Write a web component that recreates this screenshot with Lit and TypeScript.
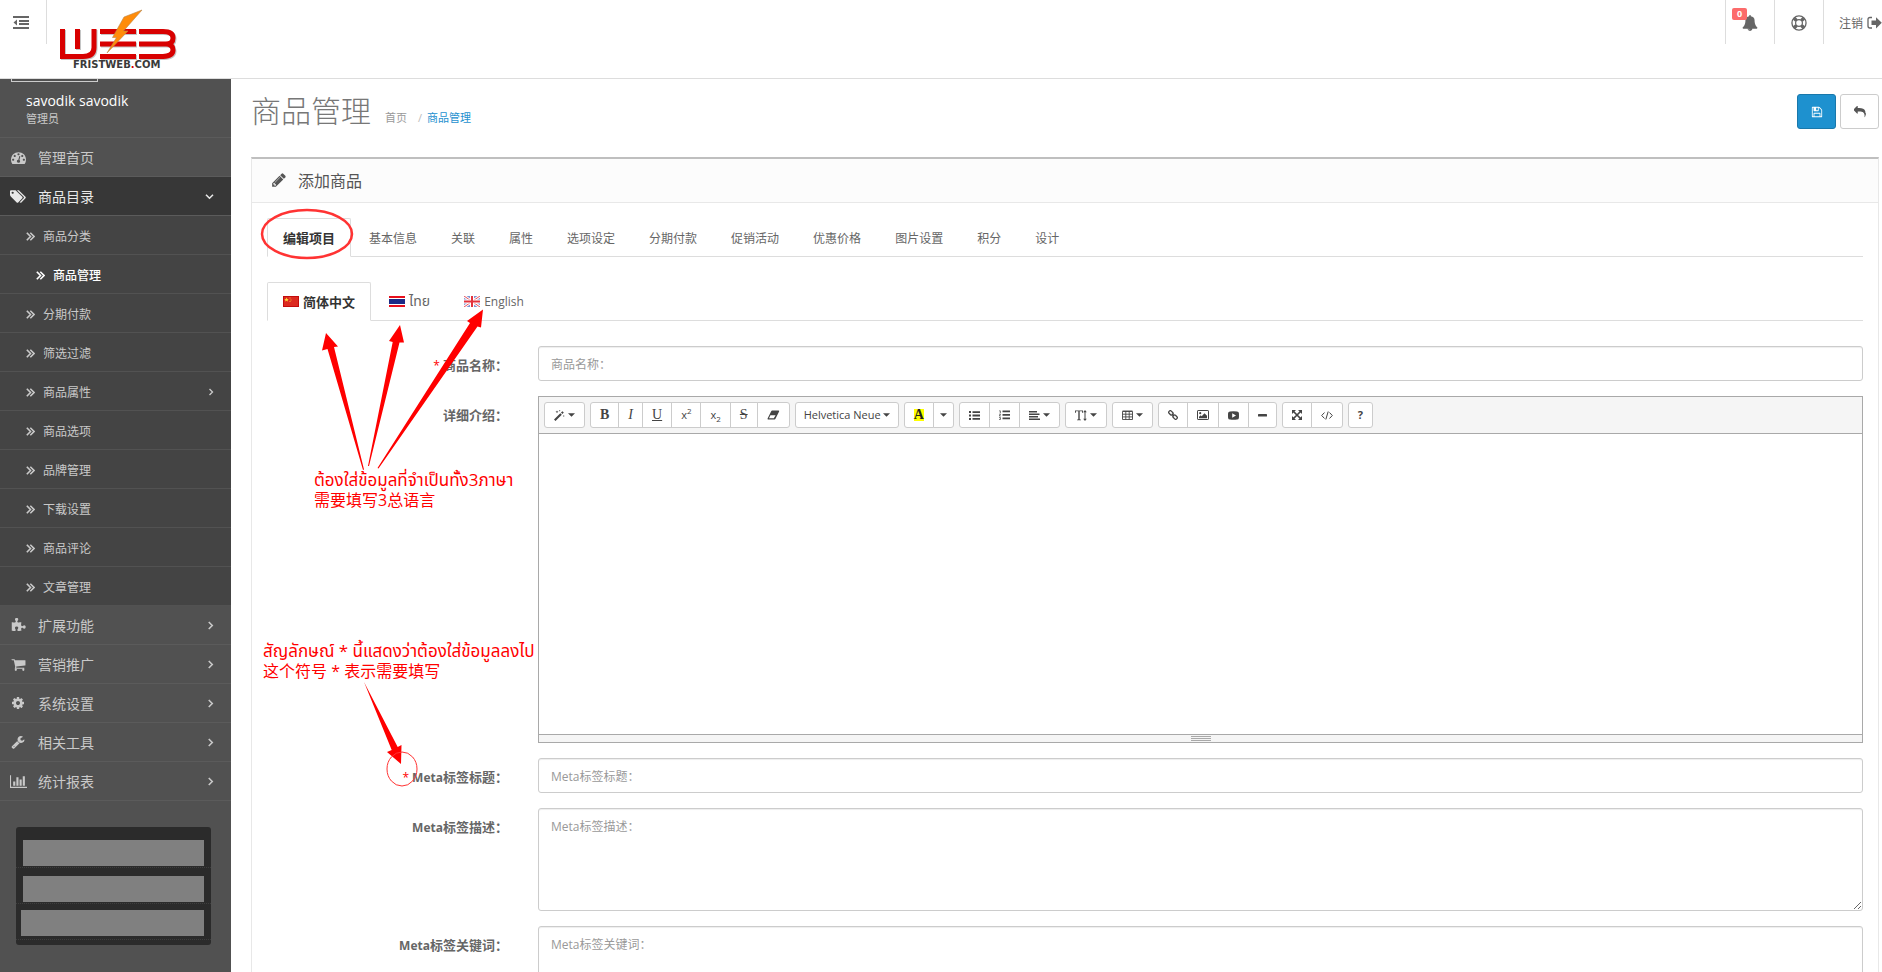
import { LitElement, html, svg, css, nothing } from "lit";
import { customElement, property } from "lit/decorators.js";
import { classMap } from "lit/directives/class-map.js";

type Glyph = { box: string; draw: unknown };

const g1792 = (d: string): Glyph => ({ box: "0 0 1792 1792", draw: svg`<path d=${d}></path>` });
const g2048 = (d: string): Glyph => ({ box: "0 0 2048 1792", draw: svg`<path d=${d}></path>` });

const glyphs: Record<string, Glyph> = {
  dedent: {
    box: "0 0 16 13",
    draw: svg`<path d="M0 0h16v2H0zM6 4h10v2H6zM6 7h10v2H6zM0 11h16v2H0zM4 3.400v6.200L.5 6.500z"></path>`,
  },
  bell: g1792("M912 1696q0-16-16-16-59 0-101.500-42.500t-42.500-101.500q0-16-16-16t-16 16q0 73 51.500 124.500t124.500 51.500q16 0 16-16zm816-288q0 52-38 90t-90 38h-448q0 106-75 181t-181 75-181-75-75-181h-448q-52 0-90-38t-38-90q50-42 91-88t85-119.500 74.500-158.500 50-206 19.500-260q0-152 117-282.500t307-158.500q-8-19-8-39 0-40 28-68t68-28 68 28 28 68q0 20-8 39 190 28 307 158.500t117 282.500q0 139 19.500 260t50 206 74.500 158.500 85 119.500 91 88z"),
  ring: {
    box: "0 0 17 17",
    draw: svg`<g fill="none" stroke="currentColor"><circle cx="8.500" cy="8.500" r="7.500" stroke-width="1.400"></circle><circle cx="8.500" cy="8.500" r="3.600" stroke-width="1.300"></circle><path d="M3.400 3.400l2.400 2.400M13.600 3.400l-2.400 2.400M3.400 13.600l2.400-2.400M13.600 13.600l-2.400-2.400" stroke-width="3.600"></path></g>`,
  },
  signout: {
    box: "0 0 15 14",
    draw: svg`<path d="M5 1.500H3Q1 1.500 1 3.500v6.500q0 2 2 2h2" fill="none" stroke="currentColor" stroke-width="1.300"></path><path d="M4.500 4.500H9V1.200L14.800 6.800 9 12.400V9H4.500z"></path>`,
  },
  gauge: g1792("M384 1152q0-53-37.500-90.500t-90.500-37.500-90.500 37.500-37.500 90.500 37.500 90.500 90.500 37.500 90.500-37.500 37.500-90.500zm192-448q0-53-37.500-90.500t-90.500-37.500-90.500 37.500-37.500 90.500 37.500 90.500 90.500 37.500 90.500-37.500 37.500-90.500zm428 481l101-382q6-26-7.500-48.500t-38.500-29.500-48 6.500-30 39.500l-101 382q-60 5-107 43.500t-63 98.500q-20 77 20 146t117 89 146-20 89-117q16-60-6-117t-72-91zm660-33q0-53-37.500-90.500t-90.500-37.500-90.500 37.500-37.500 90.500 37.500 90.500 90.500 37.500 90.500-37.500 37.500-90.500zm-640-640q0-53-37.500-90.500t-90.500-37.500-90.500 37.500-37.500 90.500 37.500 90.500 90.500 37.500 90.500-37.500 37.500-90.500zm448 192q0-53-37.500-90.500t-90.500-37.500-90.500 37.500-37.500 90.500 37.500 90.500 90.500 37.500 90.500-37.500 37.500-90.500zm320 448q0 261-141 483-19 29-54 29h-1402q-35 0-54-29-141-221-141-483 0-182 71-348t191-286 286-191 348-71 348 71 286 191 191 286 71 348z"),
  tags: g2048("M448 448q0-53-37.500-90.500t-90.500-37.500-90.500 37.500-37.500 90.500 37.500 90.500 90.500 37.500 90.500-37.500 37.500-90.500zm1067 576q0 53-37 90l-491 492q-39 37-91 37-53 0-90-37l-715-716q-38-37-64.500-101t-26.500-117v-416q0-52 38-90t90-38h416q53 0 117 26.500t102 64.500l715 714q37 39 37 91zm384 0q0 53-37 90l-491 492q-39 37-91 37-36 0-59-14t-53-45l470-470q37-37 37-90 0-52-37-91l-715-714q-38-38-102-64.500t-117-26.500h224q53 0 117 26.500t102 64.500l715 714q37 39 37 91z"),
  puzzle: g1792("M1755 1083q0 81-44.500 135t-123.500 54q-41 0-77.500-17.500t-59-38-56.500-38-71-17.500q-110 0-110 124 0 39 16 115t15 115v5q-22 0-33 1-34 3-97.500 11.500t-115.500 13.500-98 5q-61 0-103-26.500t-42-83.500q0-37 17.500-71t38-56.500 38-59 17.500-77.500q0-79-54-123.500t-135-44.500q-84 0-143 45.500t-59 127.500q0 43 15 83t33.500 64.500 33.500 53 15 50.500q0 45-46 89-37 35-117 35-95 0-245-24-9-2-27.500-4t-27.500-4l-13-2q-1 0-3-1-2 0-2-1v-1024q2 1 17.500 3.500t34 5 21.500 3.500q150 24 245 24 80 0 117-35 46-44 46-89 0-22-15-50.500t-33.500-53-33.500-64.500-15-83q0-82 59-127.500t144-45.500q80 0 134 44.500t54 123.500q0 41-17.500 77.500t-38 59-38 56.500-17.500 71q0 57 42 83.500t103 26.500q64 0 180-15t163-17v2q-1 2-3.500 17.500t-5 34-3.500 21.500q-24 150-24 245 0 80 35 117 44 46 89 46 22 0 50.500-15t53-33.500 64.500-33.500 83-15q82 0 127.500 59t45.500 143z"),
  cart: g1792("M704 1536q0 52-38 90t-90 38-90-38-38-90 38-90 90-38 90 38 38 90zm896 0q0 52-38 90t-90 38-90-38-38-90 38-90 90-38 90 38 38 90zm128-1088v512q0 24-16.500 42.500t-40.500 21.500l-1044 122q13 60 13 70 0 16-24 64h920q26 0 45 19t19 45-19 45-45 19h-1024q-26 0-45-19t-19-45q0-11 8-31.500t16-36 21.500-40 15.500-29.500l-177-823h-204q-26 0-45-19t-19-45 19-45 45-19h256q16 0 28.500 6.500t19.500 15.500 13 24.500 8 26 5.500 29.500 4.500 26h1201q26 0 45 19t19 45z"),
  cog: g1792("M1152 896q0-106-75-181t-181-75-181 75-75 181 75 181 181 75 181-75 75-181zm512-109v222q0 12-8 23t-20 13l-185 28q-19 54-39 91 35 50 107 138 10 12 10 25t-9 23q-27 37-99 108t-94 71q-12 0-26-9l-138-108q-44 23-91 38-16 136-29 186-7 28-36 28h-222q-14 0-24.500-8.500t-11.500-21.500l-28-184q-49-16-90-37l-141 107q-10 9-25 9-14 0-25-11-126-114-165-168-7-10-7-23 0-12 8-23 15-21 51-66.500t54-70.500q-27-50-41-99l-183-27q-13-2-21-12.500t-8-23.500v-222q0-12 8-23t19-13l186-28q14-46 39-92-40-57-107-138-10-12-10-24 0-10 9-23 26-36 98.500-107.500t94.500-71.500q13 0 26 10l138 107q44-23 91-38 16-136 29-186 7-28 36-28h222q14 0 24.500 8.500t11.500 21.500l28 184q49 16 90 37l142-107q9-9 24-9 13 0 25 10 129 119 165 170 7 8 7 22 0 12-8 23-15 21-51 66.500t-54 70.500q26 50 41 98l183 28q13 2 21 12.500t8 23.500z"),
  wrench: g1792("M448 1472q0-26-19-45t-45-19-45 19-19 45 19 45 45 19 45-19 19-45zm644-420l-682 682q-37 37-90 37-52 0-91-37l-106-108q-38-36-38-90 0-53 38-91l681-681q39 98 114.500 173.500t173.500 114.500zm634-435q0 39-23 106-47 134-164.500 217.500t-258.500 83.500q-185 0-316.500-131.500t-131.500-316.500 131.500-316.500 316.500-131.500q58 0 121.500 16.500t107.500 46.500q16 11 16 28t-16 28l-293 169v224l193 107q5-3 79-48.500t135.500-81 70.500-35.500q15 0 23.500 10t8.500 25z"),
  chart: g2048("M640 896v512h-256v-512h256zm384-512v1024h-256v-1024h256zm1024 1152v128h-2048v-1536h128v1408h1920zm-640-896v768h-256v-768h256zm384-384v1152h-256v-1152h256z"),
  pencil: g1792("M491 1536l91-91-235-235-91 91v107h128v128h107zm523-928q0-22-22-22-10 0-17 7l-542 542q-7 7-7 17 0 22 22 22 10 0 17-7l542-542q7-7 7-17zm-54-192l416 416-832 832h-416v-416zm683 96q0 53-37 90l-166 166-416-416 166-165q36-38 90-38 53 0 91 38l235 234q37 39 37 91z"),
  save: g1792("M512 1536h768v-384h-768v384zm896 0h128v-896q0-14-10-38.500t-20-34.500l-281-281q-10-10-34-20t-39-10v416q0 40-28 68t-68 28h-576q-40 0-68-28t-28-68v-416h-128v1280h128v-416q0-40 28-68t68-28h832q40 0 68 28t28 68v416zm-384-928v-320q0-13-9.500-22.500t-22.500-9.500h-192q-13 0-22.500 9.500t-9.500 22.500v320q0 13 9.500 22.500t22.500 9.500h192q13 0 22.500-9.500t9.500-22.500zm640 32v928q0 40-28 68t-68 28h-1344q-40 0-68-28t-28-68v-1344q0-40 28-68t68-28h928q40 0 88 20t76 48l280 280q28 28 48 76t20 88z"),
  reply: g1792("M1792 1120q0 166-127 451-3 7-10.500 24t-13.500 30-13 22q-12 17-28 17-15 0-23.500-10t-8.500-25q0-9 2.500-26.500t2.500-23.500q5-68 5-123 0-112-19.500-200.500t-54-153.500-89-112-116-79.500-148-49.500-172-25.500-199-8.500h-224v256q0 26-19 45t-45 19-45-19l-512-512q-19-19-19-45t19-45l512-512q19-19 45-19t45 19 19 45v256h224q713 0 875 403 53 134 53 333z"),
  right: { box: "0 0 8 10", draw: svg`<path d="M2 1l4 4-4 4" fill="none" stroke="currentColor" stroke-width="1.800"></path>` },
  down: { box: "0 0 10 8", draw: svg`<path d="M1 2l4 4 4-4" fill="none" stroke="currentColor" stroke-width="1.800"></path>` },
  double: { box: "0 0 9 9", draw: svg`<path d="M.8 .8l3.700 3.700-3.700 3.700M4.300 .8L8 4.500 4.300 8.200" fill="none" stroke="currentColor" stroke-width="1.600"></path>` },
  caret: { box: "0 0 8 4", draw: svg`<path d="M0 0h8L4 4z"></path>` },
  magic: {
    box: "0 0 11 11",
    draw: svg`<path d="M0 9.500L6.300 3.200 7.800 4.700 1.500 11zM7 2.600l1.400-1.400 1.400 1.400-1.400 1.400zM3 .4l.5 1 1 .4-1 .4-.5 1-.5-1-1-.4 1-.4zM9.800 5l.3.700.8.300-.8.300-.3.800-.3-.8-.7-.3.700-.3zM5.600 0l.4.500.6.200-.6.300-.4.600-.3-.6-.5-.3.500-.2z"></path>`,
  },
  eraser: {
    box: "0 0 13 10",
    draw: svg`<path d="M5.200 .5h6.300q1 0 .6 1L8.500 8.800q-.3.700-1 .7H1.200q-1 0-.6-1L4.200 1.200q.3-.7 1-.7zM2 8.300h4.800L8.600 5.200H3.400z" fill-rule="evenodd"></path>`,
  },
  bullets: {
    box: "0 0 11 9",
    draw: svg`<path d="M0 0h2v2H0zM0 3.500h2v2H0zM0 7h2v2H0zM3.500 .2H11v1.800H3.500zM3.500 3.600H11v1.800H3.500zM3.500 7H11v1.800H3.500z"></path>`,
  },
  numbers: {
    box: "0 0 11 10",
    draw: svg`<path d="M3.500 .5H11v1.800H3.500zM3.500 4H11v1.800H3.500zM3.500 7.500H11v1.800H3.500z"></path><path d="M.3 .8h1v2.400M.2 4.200h1.300L.4 6h1.300M.2 7.500h1.200v2H.2" fill="none" stroke="currentColor" stroke-width=".8"></path>`,
  },
  align: { box: "0 0 11 9", draw: svg`<path d="M0 0h8v1.600H0zM0 2.500h10.500v1.600H0zM0 5h9v1.600H0zM0 7.400h11V9H0z"></path>` },
  height: {
    box: "0 0 12 11",
    draw: svg`<path d="M0 .5h8v2.500H7.400L7 1.300H4.700v8l1.300.4v.6H2v-.6l1.300-.4v-8H1L.6 3H0zM10 0l1.800 2.200h-1.300v6.600h1.300L10 11 8.200 8.800h1.300V2.200H8.200z"></path>`,
  },
  table: {
    box: "0 0 11 10",
    draw: svg`<path d="M.5 1.500h10v8H.5zM.5 4.200h10M.5 6.900h10M3.800 1v8.500M7.200 1v8.500M.5 1h10" fill="none" stroke="currentColor" stroke-width=".9"></path>`,
  },
  link: {
    box: "0 0 11 11",
    draw: svg`<g fill="none" stroke="currentColor" stroke-width="1.400"><rect x="-2.600" y="-1.700" width="5.200" height="3.400" rx="1.500" transform="translate(3.200 3.200) rotate(45)"></rect><rect x="-2.600" y="-1.700" width="5.200" height="3.400" rx="1.500" transform="translate(7.800 7.800) rotate(45)"></rect><path d="M4.200 4.200l2.600 2.600"></path></g>`,
  },
  image: {
    box: "0 0 12 10",
    draw: svg`<rect x=".5" y=".5" width="11" height="9" rx=".6" fill="none" stroke="currentColor"></rect><circle cx="3.200" cy="3.200" r="1.100"></circle><path d="M2 8.200V6.800l1.700-1.600 1 1 2.800-3L10 5.700v2.500z"></path>`,
  },
  video: {
    box: "0 0 11 9",
    draw: svg`<path d="M2 .4Q5.500 0 9 .4q1.700.2 1.900 1.700.2 2.400 0 4.800Q10.700 8.400 9 8.600q-3.500.4-7 0Q.3 8.400.1 6.900q-.2-2.400 0-4.800Q.3.600 2 .4zM4.200 2.300v4.400L8 4.500z" fill-rule="evenodd"></path>`,
  },
  minus: { box: "0 0 9 9", draw: svg`<rect y="3" width="9" height="2.500" rx=".6"></rect>` },
  expand: {
    box: "0 0 10 10",
    draw: svg`<path d="M0 0h4L0 4zM10 0v4L6 0zM0 10V6l4 4zM10 10H6l4-4z"></path><path d="M1.500 1.500l7 7M8.500 1.500l-7 7" stroke="currentColor" stroke-width="1.700"></path>`,
  },
  code: {
    box: "0 0 12 9",
    draw: svg`<path d="M3.500 1.500L.7 4.500l2.800 3M8.500 1.500l2.800 3-2.800 3M7.200 .5L4.800 8.500" fill="none" stroke="currentColor"></path>`,
  },
};

const icon = (name: string, width: number, height = width) =>
  html`<svg class="icon" width=${width} height=${height} viewBox=${glyphs[name].box} fill="currentColor" aria-hidden="true">${glyphs[name].draw}</svg>`;

const flags: Record<string, unknown> = {
  zh: html`<svg class="flag" width="16" height="11" viewBox="0 0 16 11" aria-hidden="true"><rect width="16" height="11" fill="#c40c0c"></rect><rect x="1" y="1" width="14" height="9" fill="#dc2a20"></rect><path d="M3.500 1.500l.7 1.400 1.500.1-1.100 1 .4 1.500-1.500-.8-1.400.8.3-1.500-1.100-1 1.600-.1z" fill="#ffd83a"></path><path d="M6.500 1.500h1v1h-1zM7.500 3.500h1v1h-1zM6.500 5h1v1h-1z" fill="#f8b030"></path></svg>`,
  th: html`<svg class="flag" width="16" height="11" viewBox="0 0 16 11" aria-hidden="true"><rect width="16" height="11" fill="#e8101c"></rect><rect y="2" width="16" height="7" fill="#fff"></rect><rect y="3" width="16" height="5" fill="#1c2a86"></rect></svg>`,
  en: html`<svg class="flag" width="16" height="11" viewBox="0 0 16 11" aria-hidden="true"><rect width="16" height="11" fill="#7f93d2"></rect><path d="M0 0l16 11M16 0L0 11" stroke="#fff" stroke-width="2.800"></path><path d="M0 0l16 11M16 0L0 11" stroke="#e8505a" stroke-width="1"></path><path d="M8 0v11M0 5.500h16" stroke="#fff" stroke-width="4"></path><path d="M8 0v11M0 5.500h16" stroke="#e3323c" stroke-width="2"></path></svg>`,
};

const SANS = css`"Open Sans", "Noto Sans CJK SC", "Noto Sans Thai", sans-serif`;

const base = css`
  * { box-sizing: border-box; }
  ul { list-style: none; margin: 0; padding: 0; }
  a { color: inherit; text-decoration: none; }
  button, input, textarea { font: inherit; color: inherit; margin: 0; }
  button { cursor: pointer; }
  .icon, .flag { display: block; flex: none; }
`;

@customElement("top-bar")
class TopBar extends LitElement {
  static styles = [base, css`
    :host { display: block; border-bottom: 1px solid #ddd; background: #fff; color: #666; }
    .bar { display: flex; align-items: flex-start; height: 78px; }
    .toggle { display: flex; padding: 16px 17px 15px 13px; border: 0; border-right: 1px solid #ddd; background: none; color: #666; }
    .brand { padding: 8px 12px 0; }
    .brand svg { display: block; }
    .mark { font: bold 10px "DejaVu Sans", sans-serif; }
    .menu { display: flex; margin-left: auto; }
    .cell { display: flex; align-items: center; height: 44px; padding: 0 16px; border-left: 1px solid #ddd; font-size: 12px; }
    .cell.out { gap: 4px; padding: 2px 0 0 15px; }
    .cell.bell, .cell.help { padding-top: 2px; }
    .alert { position: relative; display: block; }
    .badge { position: absolute; left: -10px; top: -7px; min-width: 15px; padding: 0 4px; border-radius: 2px; background: #fc6b6b; color: #fff; font-size: 9px; font-weight: 700; line-height: 12px; text-align: center; }
  `];

  render() {
    return html`<header class="bar">
      <button class="toggle" type="button" aria-label="Toggle menu">${icon("dedent", 16, 13)}</button>
      <a class="brand" href="#" aria-label="fristweb.com">
        <svg width="120" height="62" viewBox="0 0 120 62">
          <g fill="none" stroke="#8d8d8d" stroke-width="5" transform="translate(1 1)" opacity=".5">
            <path d="M3.500 21v27.500H24q11 0 11-9V21M18.500 21v20"></path>
            <path d="M41 23.500h36M41 36h36M41 48.500h36M80 23.500h24q10 0 10 6.500 0 6-7 6H80m27 0q7 0 7 6t-10 6.500H80"></path>
          </g>
          <g fill="none" stroke="#d80000" stroke-width="5">
            <path d="M3.500 21v27.500H24q11 0 11-9V21M18.500 21v20"></path>
            <path d="M41 23.500h36M41 36h36M41 48.500h36M80 23.500h24q10 0 10 6.500 0 6-7 6H80m27 0q7 0 7 6t-10 6.500H80"></path>
          </g>
          <path d="M83 2L65 9 53.500 29.500h4L48 45l21-22h-4.500z" fill="#ff8c0a" stroke="#b9874c" stroke-width=".6"></path>
          <text class="mark" x="14" y="60" fill="#3a3a3a">FRISTWEB<tspan fill="#d80000">.</tspan>COM</text>
        </svg>
      </a>
      <nav class="menu">
        <a class="cell bell" href="#" aria-label="通知"><span class="alert">${icon("bell", 16)}<span class="badge">0</span></span></a>
        <a class="cell help" href="#" aria-label="帮助">${icon("ring", 16)}</a>
        <a class="cell out" href="#">注销 ${icon("signout", 15, 14)}</a>
      </nav>
    </header>`;
  }
}

type MenuItem = { text: string; icon?: string; size?: number; open?: boolean; fold?: boolean; active?: boolean; children?: MenuItem[] };

const MENU: MenuItem[] = [
  { text: "管理首页", icon: "gauge", size: 15 },
  {
    text: "商品目录", icon: "tags", size: 17, open: true, fold: true,
    children: [
      { text: "商品分类" }, { text: "商品管理", active: true }, { text: "分期付款" }, { text: "筛选过滤" },
      { text: "商品属性", fold: true }, { text: "商品选项" }, { text: "品牌管理" }, { text: "下载设置" },
      { text: "商品评论" }, { text: "文章管理" },
    ],
  },
  { text: "扩展功能", icon: "puzzle", size: 15, fold: true },
  { text: "营销推广", icon: "cart", size: 15, fold: true },
  { text: "系统设置", icon: "cog", size: 14, fold: true },
  { text: "相关工具", icon: "wrench", size: 14, fold: true },
  { text: "统计报表", icon: "chart", size: 17, fold: true },
];

@customElement("side-menu")
class SideMenu extends LitElement {
  static styles = [base, css`
    :host { display: block; background: #515151; color: #c9c9c9; }
    .profile { height: 59px; border-bottom: 1px solid #5b5b5b; padding-left: 26px; }
    .avatar { width: 87px; height: 3px; margin-left: -15px; border: 1px solid #ccc; border-top: 0; }
    .name { margin: 8px 0 0; font-size: 14px; font-weight: 500; line-height: 22px; color: #fff; }
    .role { font-size: 11px; line-height: 14px; }
    .row { display: flex; align-items: center; height: 39px; padding-right: 17px; border-bottom: 1px solid #5b5b5b; font-size: 14px; }
    .pic { display: flex; justify-content: center; width: 36px; margin-right: 2px; }
    .label { flex: 1; }
    .row.open { background: #373737; color: #e8e8e8; }
    .sub .row { padding: 2px 17px 0 26px; gap: 8px; background: #444; border-color: #525252; font-size: 12px; }
    .sub .row.active { padding-left: 36px; color: #fff; font-weight: 500; }
    .stats { margin: 26px 20px 28px 16px; padding: 13px 0 5px; border-radius: 3px; background: #2b2b2b; }
    .stat { height: 36px; padding: 0 7px; border-bottom: 1px dotted #3e3e3e; }
    .stat:not(:first-child) { padding-top: 8px; }
    .stat:first-child { height: 28px; }
    .fill { height: 26px; background: #808080; }
    .stat:last-child { padding: 6px 7px 0 5px; }
  `];

  private row(item: MenuItem) {
    const fold = item.open ? icon("down", 9, 7) : item.icon ? icon("right", 7, 9) : icon("right", 6, 8);
    return html`<a class=${classMap({ row: true, open: !!item.open, active: !!item.active })} href="#">
      ${item.icon ? html`<span class="pic">${icon(item.icon, item.size!)}</span>` : icon("double", 9)}
      <span class="label">${item.text}</span>
      ${item.fold ? fold : nothing}
    </a>`;
  }

  render() {
    return html`
      <div class="profile"><div class="avatar"></div><p class="name">savodik savodik</p><div class="role">管理员</div></div>
      <nav><ul>${MENU.map((item) => html`<li>${this.row(item)}${item.children
        ? html`<ul class="sub">${item.children.map((child) => html`<li>${this.row(child)}</li>`)}</ul>` : nothing}</li>`)}</ul></nav>
      <div class="stats">${[1, 2, 3].map(() => html`<div class="stat"><div class="fill"></div></div>`)}</div>`;
  }
}

const caret = html`${icon("caret", 7, 4)}`;

const TOOLS: unknown[][] = [
  [html`${icon("magic", 11)}${caret}`],
  [
    html`<b class="serif">B</b>`, html`<i class="serif">I</i>`, html`<u class="serif">U</u>`,
    html`<span>x<sup>2</sup></span>`, html`<span>x<sub>2</sub></span>`,
    html`<s class="serif">S</s>`, icon("eraser", 13, 10),
  ],
  [html`<span class="family">Helvetica Neue</span>${caret}`],
  [html`<b class="serif mark">A</b>`, html`<span class="slim"></span>${caret}`],
  [icon("bullets", 11, 9), icon("numbers", 11, 10), html`${icon("align", 11, 9)}${caret}`],
  [html`${icon("height", 12, 11)}${caret}`],
  [html`${icon("table", 11, 10)}${caret}`],
  [icon("link", 10), icon("image", 12, 10), icon("video", 11, 9), icon("minus", 9)],
  [icon("expand", 10), icon("code", 12, 9)],
  [html`<b>?</b>`],
];

@customElement("rich-editor")
class RichEditor extends LitElement {
  @property() label = "";

  static styles = [base, css`
    :host { display: block; border: 1px solid #a9a9a9; background: #fff; }
    .tools { display: flex; flex-wrap: wrap; gap: 5px; padding: 5px; background: #f5f5f5; border-bottom: 1px solid #a9a9a9; }
    .group { display: flex; }
    .tool { display: flex; align-items: center; justify-content: center; gap: 3px; height: 26px; padding: 0 9px; border: 1px solid #ccc; background: #fff; color: #444; font-size: 11px; line-height: 14px; }
    .tool + .tool { margin-left: -1px; }
    .tool:has(.slim) { padding: 0 6px; gap: 0; }
    .tool:has(.family) { padding: 0 8px; gap: 2px; }
    .tool:first-child { border-radius: 3px 0 0 3px; }
    .tool:last-child { border-radius: 0 3px 3px 0; }
    .tool:only-child { border-radius: 3px; }
    .tool sup, .tool sub { font-size: 8px; line-height: 0; }
    .serif { font-family: "Liberation Serif", serif; font-size: 14px; }
    .mark { background: #ff0; line-height: 12px; color: #222; }
    .page { height: 300px; outline: none; }
    .grip { display: flex; flex-direction: column; align-items: center; gap: 1px; height: 8px; padding-top: 1px; border-top: 1px solid #a9a9a9; background: #f5f5f5; }
    .grip i { width: 20px; height: 1px; background: #a9a9a9; }
  `];

  render() {
    return html`
      <div class="tools" role="toolbar">${TOOLS.map((group) => html`<div class="group">${group.map((tool) => html`<button class="tool" type="button">${tool}</button>`)}</div>`)}</div>
      <div class="page" contenteditable="true" role="textbox" aria-label=${this.label}></div>
      <div class="grip"><i></i><i></i><i></i></div>`;
  }
}

const TABS = ["编辑项目", "基本信息", "关联", "属性", "选项设定", "分期付款", "促销活动", "优惠价格", "图片设置", "积分", "设计"];
const LANGUAGES = [["zh", "简体中文"], ["th", "ไทย"], ["en", "English"]];

@customElement("product-form")
class ProductForm extends LitElement {
  static styles = [base, css`
    :host { display: block; position: relative; padding: 0 3px 0 20px; background: #fff; color: #666; }
    .head { display: flex; align-items: center; padding: 15px 0 28px; }
    h1 { margin: 0 14px 0 0; padding-bottom: 4px; font-size: 30px; line-height: 31px; font-weight: 300; color: #777; font-family: "Noto Sans CJK SC", sans-serif; }
    .crumbs { display: flex; padding-top: 12px; font-size: 11px; line-height: 16px; color: #999; }
    .crumbs li + li::before { content: "/"; padding: 0 5px 0 11px; color: #bbb; }
    .crumbs .here { color: #1e91cf; }
    .actions { display: flex; gap: 4px; margin-left: auto; }
    .action { display: flex; align-items: center; justify-content: center; width: 39px; height: 35px; border: 1px solid #ccc; border-radius: 3px; background: #fff; color: #555; }
    .action.primary { background: #1e91cf; border-color: #1978ab; color: #fff; }
    .panel { border: 1px solid #e8e8e8; border-top: 2px solid #bfbfbf; }
    .title { display: flex; align-items: center; gap: 11px; margin: 0; height: 44px; padding: 0 19px 2px; border-bottom: 1px solid #e8e8e8; background: #fcfcfc; font-size: 16px; font-weight: 400; color: #555; }
    .body { padding: 15px; }
    .tabs { display: flex; gap: 2px; margin-bottom: 25px; border-bottom: 1px solid #ddd; }
    .tab { display: flex; align-items: center; gap: 4px; height: 39px; margin-bottom: -1px; padding: 0 15px; border: 1px solid transparent; border-radius: 2px 2px 0 0; font-size: 12px; }
    .tab.on { border-color: #ddd #ddd #fff; background: #fff; color: #333; font-size: 13px; font-weight: 700; }
    .tab:lang(th) { font-size: 14px; }
    .field { display: grid; grid-template-columns: minmax(0, 1fr) minmax(0, 5fr); margin: 0 -15px 15px; }
    .caption { padding: 9px 15px 0; text-align: right; font-size: 13px; font-weight: 700; line-height: 20px; }
    .caption .latin { font-size: 12px; }
    .must { color: #f00; font-weight: 400; font-size: 12px; }
    .slot { padding: 0 15px; }
    .box { display: block; width: 100%; height: 35px; padding: 9px 12px 7px; border: 1px solid #ccc; border-radius: 3px; background: #fff; box-shadow: inset 0 1px 1px #eee; font-size: 12px; line-height: 17px; outline: none; }
    .box::placeholder { color: #999; opacity: 1; }
    .area { height: 103px; }
    .notes { position: absolute; left: 0; top: 0; overflow: visible; pointer-events: none; }
    .note { position: absolute; color: #f00; font-size: 16px; line-height: 21px; white-space: nowrap; pointer-events: none; }
    .note p { margin: 0; }
    .note p:lang(th) { font-size: 17px; }
    .first { left: 83px; top: 390px; }
    .second { left: 32px; top: 561px; }
  `];

  private field(id: string, caption: unknown, placeholder: string, required = false, area = false) {
    return html`<div class="field">
      <label class="caption" for=${id}>${required ? html`<span class="must">* </span>` : nothing}${caption}</label>
      <div class="slot">${area
        ? html`<textarea class="box area" id=${id} placeholder=${placeholder}></textarea>`
        : html`<input class="box" id=${id} type="text" placeholder=${placeholder}>`}</div>
    </div>`;
  }

  render() {
    const meta = html`<span class="latin">Meta</span>`;
    return html`
      <div class="head">
        <h1>商品管理</h1>
        <ul class="crumbs"><li><a href="#">首页</a></li><li><a class="here" href="#">商品管理</a></li></ul>
        <div class="actions">
          <button class="action primary" type="button" aria-label="保存">${icon("save", 12)}</button>
          <button class="action" type="button" aria-label="返回">${icon("reply", 12)}</button>
        </div>
      </div>
      <section class="panel">
        <h2 class="title">${icon("pencil", 16)}添加商品</h2>
        <form class="body">
          <ul class="tabs">${TABS.map((text, i) => html`<li><a class=${classMap({ tab: true, on: i === 0 })} href="#">${text}</a></li>`)}</ul>
          <ul class="tabs">${LANGUAGES.map(([code, text], i) => html`<li><a class=${classMap({ tab: true, on: i === 0 })} lang=${code} href="#">${flags[code]}${text}</a></li>`)}</ul>
          ${this.field("name", "商品名称：", "商品名称：", true)}
          <div class="field">
            <span class="caption">详细介绍：</span>
            <div class="slot"><rich-editor label="详细介绍"></rich-editor></div>
          </div>
          ${this.field("meta-title", html`${meta}标签标题：`, "Meta标签标题：", true)}
          ${this.field("meta-description", html`${meta}标签描述：`, "Meta标签描述：", false, true)}
          ${this.field("meta-keyword", html`${meta}标签关键词：`, "Meta标签关键词：", false, true)}
        </form>
      </section>
      <svg class="notes" width="320" height="740" aria-hidden="true">
        <g transform="translate(-231 -79)" fill="#f00">
          <ellipse cx="307" cy="234" rx="45" ry="24" fill="none" stroke="#f33" stroke-width="2.500"></ellipse>
          <path d="M363 470L327.500 349 322 350.500 326 333 338 346.500 334 347 364 469.500z"></path>
          <path d="M368 466L392.700 342 389 341 400 325 404 342.500 399.500 342.500 369 466z"></path>
          <path d="M377.500 468L470 323 467 321 483 309.500 481 327.500 477.500 326.500 378.500 468.500z"></path>
          <path d="M364 682L391.700 750 387 752 401 764 401.500 745 397.700 747z"></path>
          <ellipse cx="402" cy="769" rx="15" ry="17" fill="none" stroke="#f33"></ellipse>
        </g>
      </svg>
      <div class="note first"><p lang="th">ต้องใส่ข้อมูลที่จำเป็นทั้ง3ภาษา</p><p>需要填写3总语言</p></div>
      <div class="note second"><p lang="th">สัญลักษณ์ * นี้แสดงว่าต้องใส่ข้อมูลลงไป</p><p>这个符号 * 表示需要填写</p></div>`;
  }
}

@customElement("app-root")
class AppRoot extends LitElement {
  static styles = css`
    :host { display: flex; flex-direction: column; height: 100vh; overflow: hidden; background: #fff; font-family: ${SANS}; font-size: 12px; }
    top-bar { flex: none; }
    .shell { display: flex; flex: 1; min-height: 0; }
    side-menu { flex: none; width: 231px; }
    product-form { flex: 1; min-width: 0; overflow: hidden; }
  `;

  render() {
    return html`<top-bar></top-bar><div class="shell"><side-menu></side-menu><product-form></product-form></div>`;
  }
}
